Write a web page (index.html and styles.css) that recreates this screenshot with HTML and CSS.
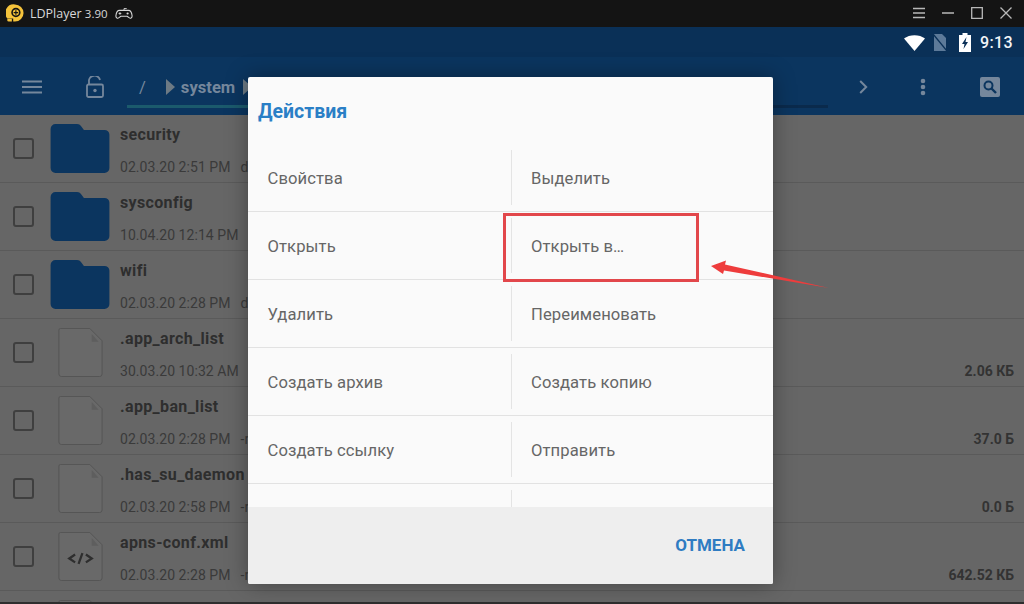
FILE: index.html
```html
<!DOCTYPE html>
<html lang="ru">
<head>
<meta charset="utf-8">
<title>LDPlayer</title>
<link rel="stylesheet" href="styles.css">
</head>
<body>
<div class="window">
  <header class="titlebar">
    <svg class="logo" viewBox="0 0 20 20"><path d="M10 .5a9.500 9.500 0 0 1 0 19H8v-3.500H1.400A9.500 9.500 0 0 1 10 .5z" fill="#f5c33b"/><path d="M1.500 16.500H6.500v3H3A1.500 1.500 0 0 1 1.500 18z" fill="#f5c33b"/><circle cx="11" cy="9.500" r="4.300" fill="none" stroke="#141414" stroke-width="1.800"/><path d="M11 7v5M8.500 9.500h5" stroke="#141414" stroke-width="1.300"/></svg>
    <span class="app-name">LDPlayer <span class="app-version">3.90</span></span>
    <svg class="pad" viewBox="0 0 20 14"><path d="M5 3.500h10c2.400 0 3.600 2.500 4 6 .2 2-1.600 3.400-3 2.400L13.500 10h-7L4 11.900c-1.400 1-3.200-.4-3-2.400.4-3.500 1.600-6 4-6z" fill="none" stroke="#d8d8d8" stroke-width="1.200"/><path d="M10 3.500V1.500h3M4 7h3M5.500 5.500v3" fill="none" stroke="#d8d8d8"/><circle cx="14" cy="7" r="1.200" fill="#d8d8d8"/></svg>
    <div class="win-controls">
      <svg viewBox="0 0 12 12"><path d="M0 1.500h12M0 6h12M0 10.500h12" stroke="#b8b8b8" stroke-width="1.500"/></svg>
      <svg viewBox="0 0 12 12"><path d="M0 6h12" stroke="#b8b8b8" stroke-width="1.500"/></svg>
      <svg viewBox="0 0 12 12"><path d="M.7.7h10.600v10.600H.7z" fill="none" stroke="#b8b8b8" stroke-width="1.300"/></svg>
      <svg viewBox="0 0 12 12"><path d="M.5.500l11 11M11.500.500l-11 11" stroke="#b8b8b8" stroke-width="1.300"/></svg>
    </div>
  </header>

  <div class="statusbar">
    <svg class="st-wifi" viewBox="0 0 21 16"><path d="M0 3.500C5.500-1 15.500-1 21 3.500L10.500 16z" fill="#fff"/></svg>
    <svg class="st-sim" viewBox="0 0 14 17"><path d="M1 0h8l4 4v13H1z" fill="#5d7a99"/><path d="M0 0l14 17" stroke="#0a3057" stroke-width="1.400"/></svg>
    <svg class="st-batt" viewBox="0 0 12 19"><path d="M3.500 0h5v2H12v17H0V2h3.500z" fill="#fff"/><path d="M7.500 4L3 11h2.500l-1 5L9 9H6.500z" fill="#0a3057"/></svg>
    <span class="st-time">9:13</span>
  </div>

  <nav class="toolbar">
    <svg class="tb-menu" viewBox="0 0 20 14"><path d="M0 1.500h20M0 7h20M0 12.500h20" stroke="#75879c" stroke-width="2"/></svg>
    <svg class="tb-lock" viewBox="0 0 18 22"><path d="M3 8.500V5.500a5.500 5 0 0 1 11-1.500" fill="none" stroke="#75879c" stroke-width="1.800"/><rect x="1" y="8.500" width="16" height="12.500" rx="1.500" fill="none" stroke="#75879c" stroke-width="1.800"/><circle cx="9" cy="14.500" r="1.700" fill="#75879c"/></svg>
    <div class="path">
      <span class="crumb-root">/</span>
      <i class="crumb-arrow"></i>
      <span class="crumb">system</span>
      <i class="crumb-arrow"></i>
    </div>
    <svg class="tb-next" viewBox="0 0 9 14"><path d="M1.200 1l6 6-6 6" fill="none" stroke="#75879c" stroke-width="2"/></svg>
    <svg class="tb-dots" viewBox="0 0 6 18"><circle cx="3" cy="3" r="2.300" fill="#75879c"/><circle cx="3" cy="9" r="2.300" fill="#75879c"/><circle cx="3" cy="15" r="2.300" fill="#75879c"/></svg>
    <div class="tb-search"><svg viewBox="0 0 14 14"><circle cx="5.500" cy="5.500" r="4" fill="none" stroke="#0b355f" stroke-width="2"/><path d="M8.500 8.500L13 13" stroke="#0b355f" stroke-width="2.400"/></svg></div>
  </nav>

  <main class="list">
    <div class="row"><i class="check"></i><svg class="ico-folder" viewBox="0 0 60 50"><path d="M5 0h22c2 0 3 1 4 2l3 4h21a5 5 0 0 1 5 5v34a5 5 0 0 1-5 5H5a5 5 0 0 1-5-5V5a5 5 0 0 1 5-5z" fill="#0b355f"/></svg><div class="info"><b>security</b><div class="meta"><span>02.03.20 2:51 PM</span><span class="perm">d</span></div></div></div>
    <div class="row"><i class="check"></i><svg class="ico-folder" viewBox="0 0 60 50"><path d="M5 0h22c2 0 3 1 4 2l3 4h21a5 5 0 0 1 5 5v34a5 5 0 0 1-5 5H5a5 5 0 0 1-5-5V5a5 5 0 0 1 5-5z" fill="#0b355f"/></svg><div class="info"><b>sysconfig</b><div class="meta"><span>10.04.20 12:14 PM</span></div></div></div>
    <div class="row"><i class="check"></i><svg class="ico-folder" viewBox="0 0 60 50"><path d="M5 0h22c2 0 3 1 4 2l3 4h21a5 5 0 0 1 5 5v34a5 5 0 0 1-5 5H5a5 5 0 0 1-5-5V5a5 5 0 0 1 5-5z" fill="#0b355f"/></svg><div class="info"><b>wifi</b><div class="meta"><span>02.03.20 2:28 PM</span><span class="perm">d</span></div></div></div>
    <div class="row"><i class="check"></i><svg class="ico-file" viewBox="0 0 45 50"><path d="M2 .500h30L44.500 13v34a2.500 2.500 0 0 1-2.500 2.500H3A2.500 2.500 0 0 1 .500 47V2A1.500 1.500 0 0 1 2 .500z" fill="#696969" stroke="#555"/><path d="M34 6l7 8h-7z" fill="#5e5e5e"/></svg><div class="info"><b>.app_arch_list</b><div class="meta"><span>30.03.20 10:32 AM</span></div></div><span class="size">2.06 КБ</span></div>
    <div class="row"><i class="check"></i><svg class="ico-file" viewBox="0 0 45 50"><path d="M2 .500h30L44.500 13v34a2.500 2.500 0 0 1-2.500 2.500H3A2.500 2.500 0 0 1 .500 47V2A1.500 1.500 0 0 1 2 .500z" fill="#696969" stroke="#555"/><path d="M34 6l7 8h-7z" fill="#5e5e5e"/></svg><div class="info"><b>.app_ban_list</b><div class="meta"><span>02.03.20 2:28 PM</span><span class="perm">-r</span></div></div><span class="size">37.0 Б</span></div>
    <div class="row"><i class="check"></i><svg class="ico-file" viewBox="0 0 45 50"><path d="M2 .500h30L44.500 13v34a2.500 2.500 0 0 1-2.500 2.500H3A2.500 2.500 0 0 1 .500 47V2A1.500 1.500 0 0 1 2 .500z" fill="#696969" stroke="#555"/><path d="M34 6l7 8h-7z" fill="#5e5e5e"/></svg><div class="info"><b>.has_su_daemon</b><div class="meta"><span>02.03.20 2:58 PM</span><span class="perm">-r</span></div></div><span class="size">0.0 Б</span></div>
    <div class="row"><i class="check"></i><svg class="ico-file" viewBox="0 0 45 50"><path d="M2 .500h30L44.500 13v34a2.500 2.500 0 0 1-2.500 2.500H3A2.500 2.500 0 0 1 .500 47V2A1.500 1.500 0 0 1 2 .500z" fill="#696969" stroke="#555"/><path d="M34 6l7 8h-7z" fill="#5e5e5e"/><path d="M17 23l-6 4 6 4M28 23l6 4-6 4M24.500 21.500l-4 11" fill="none" stroke="#2e2e2e" stroke-width="2.300"/></svg><div class="info"><b>apns-conf.xml</b><div class="meta"><span>02.03.20 2:28 PM</span><span class="perm">-r</span></div></div><span class="size">642.52 КБ</span></div>
    <div class="row row-cut"><svg class="ico-file" viewBox="0 0 45 50"><path d="M2 .500h30L44.500 13v34a2.500 2.500 0 0 1-2.500 2.500H3A2.500 2.500 0 0 1 .500 47V2A1.500 1.500 0 0 1 2 .500z" fill="#696969" stroke="#555"/></svg></div>
  </main>
</div>

<section class="dialog">
  <h1 class="dialog-title">Действия</h1>
  <div class="actions">
    <div class="action">Свойства</div><div class="action">Выделить</div>
    <div class="action">Открыть</div><div class="action">Открыть в…</div>
    <div class="action">Удалить</div><div class="action">Переименовать</div>
    <div class="action">Создать архив</div><div class="action">Создать копию</div>
    <div class="action">Создать ссылку</div><div class="action">Отправить</div>
    <div class="action"></div><div class="action"></div>
  </div>
  <footer class="dialog-footer"><span class="cancel">ОТМЕНА</span></footer>
</section>

<div class="highlight"></div>
<svg class="arrow" viewBox="0 0 118 30"><path d="M0 6L15 .5 14 4.500 118 28 13 10.500 12 14z" fill="#ee3c3c"/></svg>
</body>
</html>
```

FILE: styles.css
```css
* { box-sizing: border-box; }
html, body { margin: 0; padding: 0; height: 100%; overflow: hidden; }
body { font-family: Roboto, "Noto Sans", sans-serif; background: #2e2e2e; position: relative; }

.window { display: flex; flex-direction: column; height: 602px; }

.titlebar { height: 27px; flex: none; background: #141414; display: flex; align-items: center; padding: 0 12px 1px 6px; color: #d8d8d8; }
.logo { width: 18px; height: 18px; margin-right: 6px; }
.app-name { font-family: "Open Sans", sans-serif; font-size: 12.5px; }
.app-version { font-size: 11.5px; }
.pad { width: 18px; height: 13px; margin-left: 7px; }
.win-controls { margin-left: auto; display: flex; gap: 17px; align-items: center; }
.win-controls svg { width: 12px; height: 12px; display: block; }

.statusbar { height: 30px; flex: none; background: #0a3057; display: flex; align-items: center; justify-content: flex-end; padding-right: 11px; padding-top: 1px; }
.st-wifi { width: 21px; height: 16px; margin-right: 8px; }
.st-sim { width: 14px; height: 17px; margin-right: 12px; }
.st-batt { width: 12px; height: 19px; margin-right: 9px; }
.st-time { color: #f2f5f8; font-size: 16px; font-weight: 500; letter-spacing: .4px; }

.toolbar { height: 58px; flex: none; background: #0b355f; display: flex; align-items: center; padding: 2px 24px 0 22px; }
.tb-menu { width: 20px; height: 14px; }
.tb-lock { width: 18px; height: 22px; margin-left: 44px; }
.path { margin-left: 23px; height: 100%; width: 701px; flex: none; display: flex; align-items: center; padding-left: 12px; font-size: 16.6px; font-weight: 700; color: #75879c; position: relative; }
.path::after { content: ""; position: absolute; left: 0; right: 0; top: 46px; height: 3px; background: linear-gradient(to right, #1b5a6c 0, #1b5a6c 125px, #0a2a4c 125px); }
.crumb-root { font-weight: 400; margin-right: 20px; }
.crumb-arrow { width: 0; height: 0; border-left: 9px solid #6d7a84; border-top: 8px solid transparent; border-bottom: 8px solid transparent; }
.crumb { margin: 0 8px 0 6px; }
.tb-next { width: 9px; height: 14px; margin-left: 31px; }
.tb-dots { width: 6px; height: 18px; margin-left: 52px; }
.tb-search { width: 20px; height: 20px; margin-left: 54px; background: #75879c; border-radius: 2px; display: flex; align-items: center; justify-content: center; }
.tb-search svg { width: 14px; height: 14px; }

.list { flex: 1; min-height: 0; overflow: hidden; background: #666; }
.row { height: 68px; display: flex; align-items: flex-start; padding-left: 13px; border-bottom: 1px solid #5a5a5a; position: relative; color: #2f2f2f; }
.check { width: 21px; height: 21px; margin-top: 23px; border: 2.5px solid #3f3f3f; border-radius: 3px; flex: none; }
.ico-folder { width: 60px; height: 49px; margin: 9px 10px 0 16px; flex: none; }
.ico-file { width: 45px; height: 49px; margin: 9px 17px 0 24px; flex: none; }
.row-cut { padding-left: 34px; }
.info { display: flex; flex-direction: column; }
.info b { font-size: 16px; line-height: 20px; margin-top: 10px; font-weight: 700; color: #2e2e2e; letter-spacing: .35px; white-space: nowrap; }
.meta { font-size: 14px; line-height: 18px; margin-top: 13px; display: flex; color: #3a3a3a; white-space: nowrap; letter-spacing: .06px; }
.perm { margin-left: 10px; }
.size { position: absolute; right: 10px; top: 43px; font-size: 14px; line-height: 18px; font-weight: 700; color: #333; }

.dialog { position: absolute; left: 248px; top: 77px; width: 525px; height: 507px; background: #fafafa; border-radius: 2px; box-shadow: 0 0 22px rgba(0,0,0,.35); display: flex; flex-direction: column; overflow: hidden; }
.dialog-title { margin: 0; height: 68px; flex: none; padding: 23px 0 0 10px; font-size: 19.5px; line-height: 24px; font-weight: 700; color: #2a7fc6; }
.actions { flex: 1; min-height: 0; display: grid; grid-template-columns: 263px 262px; grid-auto-rows: 68px; overflow: hidden; margin-top: -1px; }
.action { display: flex; align-items: center; font-size: 16.6px; color: #666; padding: 1px 0 0 19.5px; border-bottom: 1px solid #e2e2e2; position: relative; letter-spacing: .1px; }
.action:nth-child(even) { padding-left: 20px; }
.action:nth-child(even)::before { content: ""; position: absolute; left: 0; top: 6px; bottom: 6px; width: 1px; background: #e4e4e4; }
.dialog-footer { height: 77px; flex: none; background: #eee; display: flex; align-items: center; justify-content: flex-end; padding-right: 28px; padding-bottom: 1px; }
.cancel { font-size: 17px; font-weight: 700; color: #2f7cc2; }

.highlight { position: absolute; left: 503px; top: 213px; width: 196px; height: 69px; border: 3px solid #e2474b; }
.arrow { position: absolute; left: 711px; top: 260px; width: 118px; height: 30px; }
```
